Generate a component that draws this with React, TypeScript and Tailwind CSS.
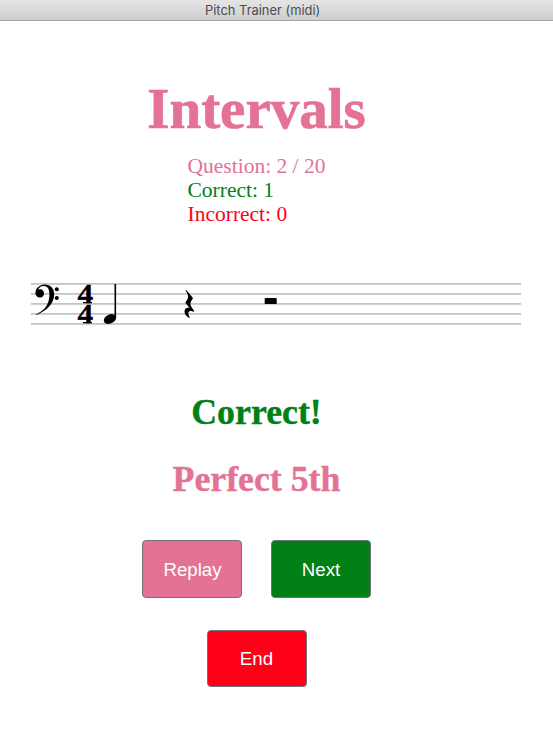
const staffLines = [283, 293, 303, 313, 323];

function Staff() {
  return (
    <svg className="block h-[60px] w-full" viewBox="0 273 553 60" aria-label="Bass staff in 4/4">
      {staffLines.map((y) => (
        <g key={y}>
          <rect x="31" y={y} width="490" height="1" fill="#c4c4c4" />
          <rect x="31" y={y + 1} width="490" height="1" fill="#d0d0d0" />
        </g>
      ))}
      <path d="M36 314.5C43 311 49 306 49.4 295.5C49.6 289.5 48 285.9 44 285.9C41 285.9 38.9 287.2 38.1 289.8C41.4 288.4 44 290.5 44 293.4C44 296 42.1 297.6 39.9 297.6C37.2 297.6 35.5 295.5 35.5 292.7C35.5 288 39.8 284.4 44.6 284.4C50.6 284.4 54.2 288.4 54.2 294.2C54.2 304.3 45.6 311.2 36.3 315Z" />
      <circle cx="56.8" cy="289.2" r="2" />
      <circle cx="56.8" cy="298" r="2" />
      <g fontFamily="'Liberation Serif', serif" fontWeight="700" fontSize="26.5" stroke="#000" strokeWidth="0.3">
        <text transform="translate(77.4 302.9) scale(1.18 1)">4</text>
        <text transform="translate(77.4 322.9) scale(1.18 1)">4</text>
      </g>
      <path d="M83 302H92V303.2H83ZM83 322H92V323.2H83Z" />
      <ellipse cx="110" cy="319" rx="6.5" ry="4.5" transform="rotate(-24 110 319)" />
      <rect x="114.5" y="284" width="1.6" height="34" />
      <path d="M185.7 290.1Q186.3 290 187 291L192.6 297.4Q193.2 298.4 192.3 299.5C190 302.3 189.8 304.6 191.8 307.5L194.2 310.9Q194.2 312 192.8 311.6C189.8 310.4 188 311.5 188.4 314C188.6 315.6 189.3 316.5 190 317.3Q190 318.1 189 317.7C186.2 316.4 184.4 313.8 184.5 311.4C184.7 308.2 187.2 307.3 189.7 308.2L185.6 303.1Q185.2 302.3 186 301.4C188.8 298.2 188.8 295.4 186.2 291.7Q185.4 290.7 185.7 290.1Z" />
      <rect x="264.7" y="298.1" width="12" height="6" rx="0.6" />
    </svg>
  );
}

export default function App() {
  return (
    <div className="flex h-[730px] w-[553px] flex-col overflow-hidden bg-white font-['Liberation_Serif',serif] text-[#e47294]">
      <header className="h-[21px] shrink-0 border-b border-[#a5a5a5] bg-linear-to-b from-[#e5e5e5] to-[#cecece] pl-[205px] font-['Inter',sans-serif] text-[12.9px] leading-[21px] whitespace-nowrap text-[#4d4d4d]">
        Pitch Trainer (midi)
      </header>
      <div className="flex w-[513px] flex-col items-center">
        <h1 className="mt-[56px] text-[57px] leading-[64px] font-bold [-webkit-text-stroke:0.7px_#e47294]">Intervals</h1>
        <div className="mt-[13px] text-[21.5px] leading-[24px] whitespace-nowrap">
          <p>Question: 2 / 20</p>
          <p className="text-[#008015]">Correct: 1</p>
          <p className="text-[#ff0019]">Incorrect: 0</p>
        </div>
      </div>
      <div className="mt-[47px]">
        <Staff />
      </div>
      <div className="flex w-[513px] flex-col items-center">
        <h2 className="mt-[58px] text-[35.8px] leading-[42px] font-bold text-[#008015] [-webkit-text-stroke:0.4px_#008015]">Correct!</h2>
        <h2 className="mt-[25px] text-[35.8px] leading-[42px] font-bold [-webkit-text-stroke:0.4px_#e47294]">Perfect 5th</h2>
        <div className="mt-[40px] flex gap-[29px] font-['Liberation_Sans',sans-serif] text-[18.7px] text-white">
          <button className="h-[58px] w-[100px] rounded-[4px] border border-[#6c757d] bg-[#e47294] pt-[2px] pl-px">Replay</button>
          <button className="h-[58px] w-[100px] rounded-[4px] border border-[#6c757d] bg-[#008015] pt-[2px]">Next</button>
        </div>
        <button className="mt-[32px] h-[57px] w-[100px] rounded-[4px] border border-[#6c757d] bg-[#ff0019] pt-[2px] font-['Liberation_Sans',sans-serif] text-[18.7px] text-white">
          End
        </button>
      </div>
    </div>
  );
}
